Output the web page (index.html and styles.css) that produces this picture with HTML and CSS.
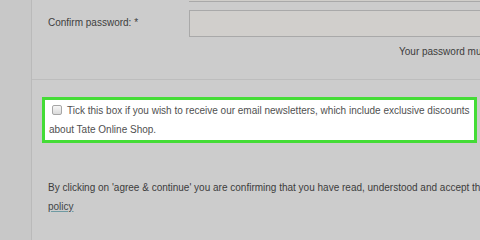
FILE: index.html
```html
<!DOCTYPE html>
<html lang="en">
<head>
<meta charset="utf-8">
<title>Create account</title>
<link rel="stylesheet" href="styles.css">
</head>
<body>
<div class="page">
  <div class="gutter"></div>
  <main class="panel">
    <section class="section section-password">
      <div class="prev-field"></div>
      <div class="field-row">
        <label class="field-label">Confirm password: *</label>
        <div class="field-input"></div>
      </div>
      <p class="hint">Your password must be at least 8 characters long</p>
    </section>
    <section class="section section-newsletter">
      <div class="newsletter">
        <span class="line"><span class="checkbox"></span>Tick this box if you wish to receive our email newsletters, which include exclusive discounts</span><br>
        <span class="line">about Tate Online Shop.</span>
      </div>
    </section>
    <section class="section section-terms">
      <p class="terms"><span class="line">By clicking on 'agree &amp; continue' you are confirming that you have read, understood and accept the terms and conditions and privacy</span><br><a class="terms-link" href="#">policy</a></p>
    </section>
  </main>
</div>
</body>
</html>
```

FILE: styles.css
```css
html, body {
  margin: 0;
  padding: 0;
  width: 480px;
  height: 240px;
  overflow: hidden;
  background: #c9c9c9;
  font-family: "Liberation Sans", Arial, sans-serif;
  font-size: 10px;
  color: #3e3e3e;
}

.page {
  display: flex;
  height: 240px;
}

.gutter {
  width: 31px;
  flex: none;
  background: #c8c8c8;
}

.panel {
  flex: 1;
  min-width: 0;
  background: #cccccc;
  border-left: 1px solid #bababa;
  overflow: hidden;
}

.section {
  padding-left: 16px;
}

.section-password {
  box-sizing: border-box;
  height: 80px;
  border-bottom: 1px solid #bdbdbd;
}

.prev-field {
  margin-left: 141px;
  height: 1px;
  background: #d0ceca;
  border-bottom: 1px solid #a9a9a9;
}

.field-row {
  display: flex;
  align-items: center;
  margin-top: 8px;
}

.field-label {
  width: 141px;
  flex: none;
  line-height: 14px;
  margin-top: -2px;
}

.field-input {
  flex: 1;
  height: 25px;
  margin-right: -20px;
  background: #d1cfcc;
  border: 1px solid #a9a9a9;
}

.hint {
  margin: 8px 0 0 351px;
  line-height: 14px;
  white-space: nowrap;
  color: #3c3c3c;
}

.section-newsletter {
  padding-top: 17px;
}

.newsletter {
  margin-left: -6px;
  width: 425px;
  padding: 1px 0 1px 4px;
  background: #ffffff;
  border: 3px solid #44dc36;
  line-height: 19px;
  color: #505050;
  white-space: nowrap;
  overflow: hidden;
}

.checkbox {
  display: inline-block;
  width: 8px;
  height: 8px;
  margin: 0 5px 0 3px;
  vertical-align: -1px;
  border: 1px solid #a6a6a6;
  border-radius: 2px;
  background: linear-gradient(#f6f6f6, #dadada);
}

.section-terms {
  padding-top: 35px;
}

.terms {
  margin: 0;
  line-height: 19px;
  white-space: nowrap;
  color: #3c3c3c;
}

.terms-link {
  color: #3e4547;
  text-decoration: underline;
  text-decoration-color: #6f9aa2;
}
```
